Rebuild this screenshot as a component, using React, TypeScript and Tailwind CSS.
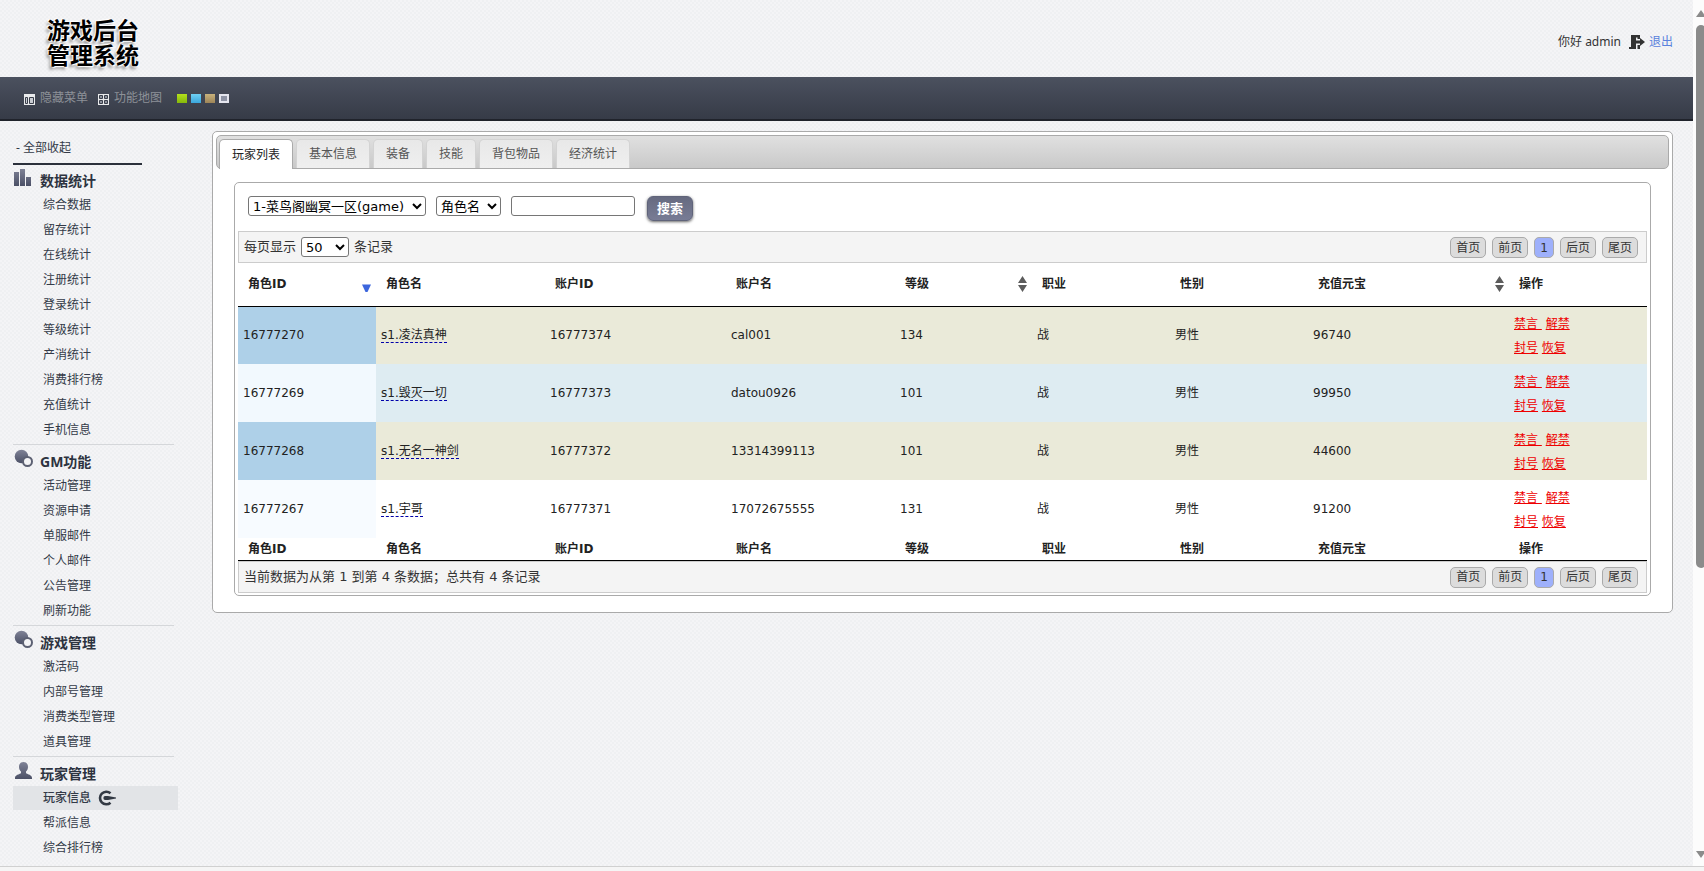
import React, { useState } from 'react';
import clsx from 'clsx';

const menuGroups = [
  {
    title: '数据统计',
    icon: 'chart',
    items: ['综合数据', '留存统计', '在线统计', '注册统计', '登录统计', '等级统计', '产消统计', '消费排行榜', '充值统计', '手机信息'],
  },
  {
    title: 'GM功能',
    icon: 'circles',
    items: ['活动管理', '资源申请', '单服邮件', '个人邮件', '公告管理', '刷新功能'],
  },
  {
    title: '游戏管理',
    icon: 'circles',
    items: ['激活码', '内部号管理', '消费类型管理', '道具管理'],
  },
  {
    title: '玩家管理',
    icon: 'user',
    items: ['玩家信息', '帮派信息', '综合排行榜'],
  },
];

const tabs = ['玩家列表', '基本信息', '装备', '技能', '背包物品', '经济统计'];

const columns = [
  { name: '角色ID', width: 'w-[138px]', sort: 'desc' },
  { name: '角色名', width: 'w-[169px]' },
  { name: '账户ID', width: 'w-[181px]' },
  { name: '账户名', width: 'w-[169px]' },
  { name: '等级', width: 'w-[137px]', sort: 'both' },
  { name: '职业', width: 'w-[138px]' },
  { name: '性别', width: 'w-[138px]' },
  { name: '充值元宝', width: 'w-[201px]', sort: 'both' },
  { name: '操作', width: 'w-[138px]' },
];

const players = [
  { id: '16777270', name: 's1.凌法真神', accountId: '16777374', account: 'cal001', level: 134, gold: 96740, row: 'bg-[#eaead9]', first: 'bg-[#aed0e8]' },
  { id: '16777269', name: 's1.毁灭一切', accountId: '16777373', account: 'datou0926', level: 101, gold: 99950, row: 'bg-[#deecf2]', first: 'bg-[#f2f9fe]' },
  { id: '16777268', name: 's1.无名一神剑', accountId: '16777372', account: '13314399113', level: 101, gold: 44600, row: 'bg-[#eaead9]', first: 'bg-[#aed0e8]' },
  { id: '16777267', name: 's1.宇哥', accountId: '16777371', account: '17072675555', level: 131, gold: 91200, row: 'bg-white', first: 'bg-[#f7fbff]' },
];

function GroupIcon({ type }: { type: string }) {
  return (
    <svg viewBox="0 0 20 20" className="w-5 h-5 shrink-0">
      <defs>
        <linearGradient id="iconFill" x1="0" y1="0" x2="0" y2="1">
          <stop offset="0" stopColor="#7f8296" />
          <stop offset="1" stopColor="#4b5066" />
        </linearGradient>
      </defs>
      {type === 'chart' && (
        <path d="M1 4h5v14H1zM7 1h5v17H7zM13 9h5v9h-5z" fill="url(#iconFill)" />
      )}
      {type === 'circles' && (
        <>
          <circle cx="8.500" cy="7.500" r="6.800" fill="url(#iconFill)" />
          <circle cx="14.500" cy="12.500" r="4.500" fill="#f4f4f6" stroke="#5c6072" strokeWidth="2" />
        </>
      )}
      {type === 'user' && (
        <path
          d="M10.500 1c3 0 4.700 2 4.500 5-.1 2-.9 3.600-2 4.600v1.700c1.700 1 6 1.700 6 4.700v1H2v-1c0-3 4.300-3.700 6-4.700v-1.700C6.900 9.600 6.100 8 6 6c-.2-3 1.500-5 4.500-5z"
          fill="url(#iconFill)"
        />
      )}
    </svg>
  );
}

function SortIcon({ type }: { type: string }) {
  return (
    <svg viewBox="0 0 9 16" className="w-[9px] h-4">
      {type === 'desc' ? (
        <path d="M0 8.500h9L5.500 16h-2z" fill="#3c66dd" />
      ) : (
        <path d="M4.500 0 9 7H0zM0 9h9l-4.500 7z" fill="#5c5c5c" />
      )}
    </svg>
  );
}

function Pager() {
  return (
    <div className="flex gap-1.5 pt-px">
      {['首页', '前页', '1', '后页', '尾页'].map((label) => (
        <button
          key={label}
          className={clsx(
            'h-[21px] px-[5px] rounded-[5px] border border-[#aaa] text-xs leading-[18px] text-[#333]',
            label === '1' ? 'bg-[#9eb0fb]' : 'bg-[#dcdcdc]'
          )}
        >
          {label}
        </button>
      ))}
    </div>
  );
}

function Header() {
  return (
    <header className="h-[77px] flex items-start justify-between pl-[47px] pr-5">
      <h1 className="mt-[18px] text-[23px] leading-[25px] font-bold text-black [text-shadow:0_0_2px_#fff,1px_1px_1px_#fff,-1px_-1px_1px_#fff,-2px_3px_3px_#999]">
        游戏后台
        <br />
        管理系统
      </h1>
      <div className="mt-8 flex items-center text-xs leading-5 text-[#333]">
        <span>你好 admin</span>
        <svg viewBox="0 0 16 15" className="ml-2 w-4 h-[15px]">
          <path d="M2 0h9v4H8.500V2.500H7V14H0v-2h2zM8.500 10H11v4H8.500z" fill="#333" />
          <path d="M7 5.500h4V3l5 4-5 4V8.500H7z" fill="#333" />
        </svg>
        <a href="#" className="ml-1 text-[#5a82dd]">退出</a>
      </div>
    </header>
  );
}

function Toolbar() {
  return (
    <div className="h-11 flex items-center pl-6 border-b-2 border-[#20232b] bg-linear-to-b from-[#4b515f] to-[#363b47] text-xs text-[#8d9198]">
      <button className="flex items-center gap-[5px]">
        <svg viewBox="0 0 11 11" className="w-[11px] h-[11px] mt-0.5">
          <path d="M0 0h11v11H0z" fill="#e9eaec" />
          <path d="M1.500 3.500h2v6h-2zM5.500 3.500h4v6h-4z" fill="#c9ccd2" stroke="#3a3f4b" />
        </svg>
        隐藏菜单
      </button>
      <button className="ml-2.5 flex items-center gap-[5px]">
        <svg viewBox="0 0 11 11" className="w-[11px] h-[11px] mt-0.5">
          <path d="M0 0h11v11H0z" fill="#e9eaec" />
          <path d="M1.500 1.500h3v3h-3zM6.500 1.500h3v3h-3zM1.500 6.500h3v3h-3zM6.500 6.500h3v3h-3z" fill="#8b909b" stroke="#3a3f4b" />
        </svg>
        功能地图
      </button>
      <div className="ml-[15px] flex gap-1">
        <button aria-label="绿色" className="w-2.5 h-[9px] bg-linear-to-b from-[#b4e01c] to-[#86b80a]" />
        <button aria-label="蓝色" className="w-2.5 h-[9px] bg-linear-to-b from-[#6fd0f4] to-[#3aa6dc]" />
        <button aria-label="棕色" className="w-2.5 h-[9px] bg-linear-to-b from-[#c9b27c] to-[#9d8558]" />
        <button aria-label="灰色" className="w-2.5 h-[9px] border-2 border-[#e4e5ee] bg-[#8e93a4]" />
      </div>
    </div>
  );
}

function Sidebar() {
  return (
    <nav className="w-[165px] ml-[13px] shrink-0 text-xs text-[#333a48]">
      <button className="block w-[129px] h-11 pt-3 pl-[3px] text-left border-b-2 border-[#2b303b]">- 全部收起</button>
      {menuGroups.map((group, i) => (
        <div key={group.title}>
          {i > 0 && <div className="mt-0.5 mb-px w-[161px] h-px bg-[#d5d7da]" />}
          <h2 className="flex h-[27px] gap-[7px] text-sm leading-5 font-bold text-[#2d3340]">
            <span className="pt-[3px]"><GroupIcon type={group.icon} /></span>
            <span className="pt-1.5">{group.title}</span>
          </h2>
          <ul className="pt-px">
            {group.items.map((item) => {
              const active = item === '玩家信息';
              return (
                <li key={item} className="mb-px">
                  <a href="#" className={clsx('flex items-center h-6 pl-[30px]', active && 'bg-[#e2e4e7] font-medium')}>
                    {item}
                    {active && (
                      <svg viewBox="0 0 18 16" className="ml-[7px] w-[18px] h-4">
                        <path d="M12.500 3.300A6.300 6.300 0 1 0 12.500 12.700" fill="none" stroke="#333a44" strokeWidth="2.600" />
                        <path d="M5.500 7.200q0-1 1.500-1.200h3l8 1.500v1l-8 1.500H7q-1.500-.2-1.500-1.200z" fill="#333a44" />
                      </svg>
                    )}
                  </a>
                </li>
              );
            })}
          </ul>
        </div>
      ))}
    </nav>
  );
}

function Filters() {
  const selectClass = 'h-5 border border-[#767676] rounded-[3px] bg-white text-[13px] text-black';
  return (
    <form className="flex items-start h-12 pt-[13px] pl-2.5" onSubmit={(e) => e.preventDefault()}>
      <select aria-label="区服" className={clsx(selectClass, 'w-[178px]')}>
        <option>1-菜鸟阁幽冥一区(game)</option>
      </select>
      <select aria-label="查询字段" className={clsx(selectClass, 'ml-2.5 w-[65px]')}>
        <option>角色名</option>
      </select>
      <input type="text" aria-label="关键字" className={clsx(selectClass, 'ml-2.5 w-[124px] px-1')} />
      <button className="ml-3 h-[25px] w-[46px] rounded-md border border-[#60647a] bg-linear-to-b from-[#666a80] to-[#787c95] shadow-[0_1px_3px_rgba(0,0,0,0.6)] text-[13px] leading-5 font-bold text-white">
        搜索
      </button>
    </form>
  );
}

function PlayerTable() {
  return (
    <table className="w-full table-fixed border-collapse text-left text-xs text-[#222]">
      <thead>
        <tr className="h-[43px] border-b border-black">
          {columns.map((col) => (
            <th key={col.name} className={clsx(col.width, 'pl-2.5 pr-[5px] font-bold')}>
              <div className="flex items-center justify-between">
                {col.name}
                {col.sort && <SortIcon type={col.sort} />}
              </div>
            </th>
          ))}
        </tr>
      </thead>
      <tbody>
        {players.map((p) => (
          <tr key={p.id} className={clsx('h-[58px]', p.row)}>
            <td className={clsx('px-[5px]', p.first)}>{p.id}</td>
            <td className="px-[5px]">
              <span className="border-b border-dashed border-[#0000aa]">{p.name}</span>
            </td>
            <td className="px-[5px]">{p.accountId}</td>
            <td className="px-[5px]">{p.account}</td>
            <td className="px-[5px]">{p.level}</td>
            <td className="px-[5px]">战</td>
            <td className="px-[5px]">男性</td>
            <td className="px-[5px]">{p.gold}</td>
            <td className="px-[5px] pt-0.5 leading-6 text-[#ee0000]">
              <a href="#" className="underline">禁言&nbsp;</a> <a href="#" className="underline">解禁</a>
              <br />
              <a href="#" className="underline">封号</a> <a href="#" className="underline">恢复</a>
            </td>
          </tr>
        ))}
      </tbody>
      <tfoot>
        <tr className="h-[22px] border-b border-black">
          {columns.map((col) => (
            <th key={col.name} className="pl-2.5 pt-px font-bold">{col.name}</th>
          ))}
        </tr>
      </tfoot>
    </table>
  );
}

function App() {
  const [tab, setTab] = useState('玩家列表');

  return (
    <div className="min-h-screen flex flex-col bg-[#f5f5f5] font-['Noto_Sans','Noto_Sans_CJK_SC',sans-serif]">
      <div className="grow flex border-b border-[#d0d0d0]">
        <div className="grow min-w-0 bg-[repeating-conic-gradient(#eff0f2_0_25%,#f4f4f6_0_50%)] bg-size-[4px_4px]">
          <Header />
          <Toolbar />
          <div className="flex">
            <Sidebar />
            <main className="grow min-w-0 mt-2.5 ml-[34px] mr-5 self-start rounded-[5px] border border-[#aaa] bg-white p-[3px] pb-4 font-['DejaVu_Sans','Noto_Sans_CJK_SC',sans-serif]">
              <div className="h-[34px] flex items-end gap-[3px] pl-0.5 rounded-[5px] border border-[#aaa] bg-linear-to-b from-[#e0e0e0] to-[#c9c9c9]">
                {tabs.map((name) => (
                  <button
                    key={name}
                    onClick={() => setTab(name)}
                    className={clsx(
                      'h-[29px] px-3 rounded-t-[5px] border border-b-0 text-xs',
                      name === tab
                        ? '-mb-px h-[30px] border-[#aaa] bg-white text-[#222]'
                        : 'border-[#d3d3d3] bg-linear-to-b from-[#e8e8e8] to-[#efefef] text-[#555]'
                    )}
                  >
                    {name}
                  </button>
                ))}
              </div>
              <section className="mt-[13px] mx-[18px] p-[3px] pt-0 pb-0.5 rounded-[5px] border border-[#aaa]">
                <Filters />
                <div className="h-8 flex items-center justify-between pl-[5px] pr-2 border border-[#ccc] bg-[#f4f4f4] text-[13px] text-[#333]">
                  <label className="flex items-center gap-[5px]">
                    每页显示
                    <select className="h-5 w-12 border border-[#767676] rounded-[3px] bg-white text-black">
                      <option>50</option>
                    </select>
                    条记录
                  </label>
                  <Pager />
                </div>
                <PlayerTable />
                <div className="h-8 flex items-center justify-between pl-[5px] pr-2 border border-[#ccc] bg-[#f4f4f4] text-[13px] text-[#333]">
                  <span>当前数据为从第 1 到第 4 条数据；总共有 4 条记录</span>
                  <Pager />
                </div>
              </section>
            </main>
          </div>
        </div>
        <div className="w-[11px] shrink-0 flex flex-col overflow-hidden bg-[#fcfcfc] pl-[3px] pt-2.5 pb-2">
          <svg viewBox="0 0 10 7" className="w-2.5 h-[7px] shrink-0"><path d="M5 0l5 7H0z" fill="#8b8b8b" /></svg>
          <div className="mt-2 mb-auto w-2.5 h-[64%] rounded-[5px] bg-[#8b8b8b]" />
          <svg viewBox="0 0 10 7" className="w-2.5 h-[7px] shrink-0"><path d="M0 0h10L5 7z" fill="#8b8b8b" /></svg>
        </div>
      </div>
      <div className="h-1" />
    </div>
  );
}

export default App;
